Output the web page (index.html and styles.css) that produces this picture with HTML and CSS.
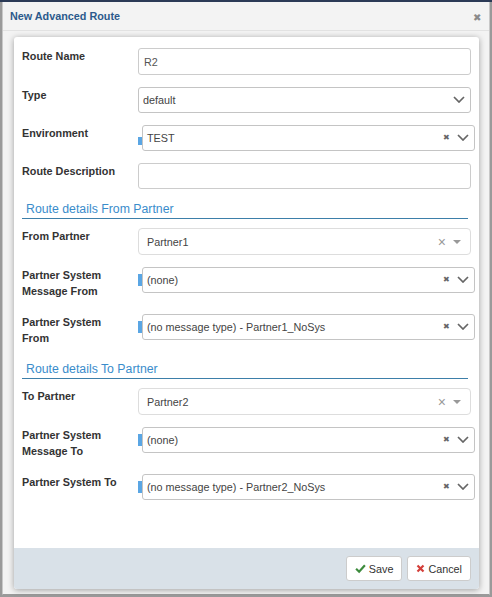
FILE: index.html
```html
<!DOCTYPE html>
<html>
<head>
<meta charset="utf-8">
<link rel="stylesheet" href="styles.css">
</head>
<body>
<div class="page">
  <div class="dialog">
    <div class="dlg-head">
      <span class="dlg-title">New Advanced Route</span>
      <span class="dlg-close">&#x2716;</span>
    </div>
    <div class="panel">
      <div class="body">
        <div class="row">
          <div class="lbl">Route Name</div>
          <div class="ctl"><div class="input">R2</div></div>
        </div>
        <div class="row">
          <div class="lbl">Type</div>
          <div class="ctl"><div class="input sel">default<svg class="chev" viewBox="0 0 12 7"><path d="M1 1 L6 6 L11 1" fill="none" stroke="#666" stroke-width="1.7"/></svg></div></div>
        </div>
        <div class="row">
          <div class="lbl">Environment</div>
          <div class="ctl req"><span class="mark env"></span><div class="input sel">TEST<span class="clr">&#x2716;</span><svg class="chev" viewBox="0 0 12 7"><path d="M1 1 L6 6 L11 1" fill="none" stroke="#666" stroke-width="1.7"/></svg></div></div>
        </div>
        <div class="row">
          <div class="lbl">Route Description</div>
          <div class="ctl"><div class="input"></div></div>
        </div>

        <div class="section">Route details From Partner</div>

        <div class="row">
          <div class="lbl">From Partner</div>
          <div class="ctl"><div class="input s2">Partner1<span class="clr2">&#x00D7;</span><span class="caret"></span></div></div>
        </div>
        <div class="row">
          <div class="lbl two">Partner System<br>Message From</div>
          <div class="ctl req"><span class="mark"></span><div class="input sel">(none)<span class="clr">&#x2716;</span><svg class="chev" viewBox="0 0 12 7"><path d="M1 1 L6 6 L11 1" fill="none" stroke="#666" stroke-width="1.7"/></svg></div></div>
        </div>
        <div class="row">
          <div class="lbl two">Partner System<br>From</div>
          <div class="ctl req"><span class="mark"></span><div class="input sel">(no message type) - Partner1_NoSys<span class="clr">&#x2716;</span><svg class="chev" viewBox="0 0 12 7"><path d="M1 1 L6 6 L11 1" fill="none" stroke="#666" stroke-width="1.7"/></svg></div></div>
        </div>

        <div class="section">Route details To Partner</div>

        <div class="row">
          <div class="lbl">To Partner</div>
          <div class="ctl"><div class="input s2">Partner2<span class="clr2">&#x00D7;</span><span class="caret"></span></div></div>
        </div>
        <div class="row">
          <div class="lbl two">Partner System<br>Message To</div>
          <div class="ctl req"><span class="mark"></span><div class="input sel">(none)<span class="clr">&#x2716;</span><svg class="chev" viewBox="0 0 12 7"><path d="M1 1 L6 6 L11 1" fill="none" stroke="#666" stroke-width="1.7"/></svg></div></div>
        </div>
        <div class="row">
          <div class="lbl">Partner System To</div>
          <div class="ctl req"><span class="mark"></span><div class="input sel">(no message type) - Partner2_NoSys<span class="clr">&#x2716;</span><svg class="chev" viewBox="0 0 12 7"><path d="M1 1 L6 6 L11 1" fill="none" stroke="#666" stroke-width="1.7"/></svg></div></div>
        </div>
      </div>
      <div class="footer">
        <button class="btn"><svg class="ico" viewBox="0 0 12 12"><path d="M1.2 6.3 L4.5 9.5 L10.8 2.5" fill="none" stroke="#3d8b3d" stroke-width="2.4"/></svg>Save</button>
        <button class="btn"><svg class="ico x" viewBox="0 0 9 9"><path d="M1.5 1.5 L7.5 7.5 M7.5 1.5 L1.5 7.5" fill="none" stroke="#d43f3a" stroke-width="2.2"/></svg>Cancel</button>
      </div>
    </div>
  </div>
</div>
</body>
</html>
```

FILE: styles.css
```css
html, body {
  margin: 0;
  padding: 0;
}
body {
  width: 492px;
  height: 597px;
  background: #9a9a9a;
  font-family: "Liberation Sans", Arial, sans-serif;
  overflow: hidden;
}
.page {
  padding-left: 2px;
  border-top: 2px solid #2b3a56;
}
.dialog {
  width: 486px;
  height: 592px;
  background: #f3f3f3;
  border-left: 1px solid #c8c8c8;
  border-right: 1px solid #c8c8c8;
  border-bottom: 1px solid #9a9a9a;
  display: flex;
  flex-direction: column;
}
.dlg-head {
  height: 28px;
  border-bottom: 1px solid #e2e2e2;
  display: flex;
  align-items: center;
  justify-content: space-between;
  padding: 0 8px 0 7px;
}
.dlg-title {
  font-size: 10.8px;
  font-weight: bold;
  color: #2c5a8c;
}
.dlg-close {
  font-size: 10px;
  color: #8a8a8a;
  padding-top: 3px;
}
.panel {
  margin: 6px 0 0 11px;
  width: 465px;
  background: #fff;
  border-radius: 3px;
  box-shadow: 0 1px 6px rgba(0,0,0,0.35);
  display: flex;
  flex-direction: column;
}
.body {
  padding: 11px 4px 48px 8px;
  height: 452px;
}
.row {
  display: flex;
  align-items: flex-start;
  margin-bottom: 12px;
}
.lbl {
  width: 116px;
  flex: none;
  font-size: 10.8px;
  font-weight: bold;
  color: #333;
  line-height: 16px;
}
.lbl.two {
  margin-bottom: 3px;
}
.ctl {
  flex: 1;
  display: flex;
  align-items: center;
  padding-right: 4px;
}
.ctl.req {
  padding-right: 0;
}
.mark {
  width: 4px;
  height: 12px;
  background: #5aa6e4;
  flex: none;
}
.mark.env {
  height: 8px;
  margin-top: 5px;
}
.input {
  flex: 1;
  height: 24px;
  border: 1px solid #ccc;
  border-radius: 3px;
  font-size: 10.8px;
  color: #555;
  padding-left: 5px;
  display: flex;
  align-items: center;
  position: relative;
  box-sizing: content-box;
}
.input.sel {
  padding-left: 4px;
  color: #444;
  border-color: #c4c4c4;
}
.row:first-child .input {
  height: 25px;
}
.chev {
  position: absolute;
  right: 5px;
  top: 8px;
  width: 12px;
  height: 7px;
}
.clr {
  position: absolute;
  right: 24px;
  top: 8px;
  font-size: 8px;
  line-height: 8px;
  color: #666;
}
.input.s2 {
  height: 25px;
  border-color: #ddd;
  border-radius: 4px;
  padding-left: 8px;
  color: #444;
}
.clr2 {
  position: absolute;
  right: 24px;
  top: 5px;
  font-size: 14px;
  color: #999;
}
.caret {
  position: absolute;
  right: 9px;
  top: 11px;
  width: 0;
  height: 0;
  border-left: 4px solid transparent;
  border-right: 4px solid transparent;
  border-top: 4px solid #999;
}
.section {
  height: 17px;
  margin: 0 7px 9px 0;
  padding-left: 4px;
  font-size: 12.3px;
  color: #3a8ccb;
  border-bottom: 1px solid #3d7fa9;
  line-height: 17px;
}
.footer {
  height: 41px;
  background: #d9e1e8;
  border-radius: 0 0 3px 3px;
  display: flex;
  justify-content: flex-end;
  align-items: center;
  gap: 5px;
  padding-right: 8px;
}
.btn {
  height: 25px;
  background: #fff;
  border: 1px solid #ccc;
  border-radius: 3px;
  font-family: "Liberation Sans", Arial, sans-serif;
  font-size: 10.8px;
  color: #333;
  display: flex;
  align-items: center;
  gap: 3px;
  padding: 0 8px;
}
.ico {
  width: 11px;
  height: 11px;
}
.ico.x {
  width: 9px;
  height: 9px;
}
```
